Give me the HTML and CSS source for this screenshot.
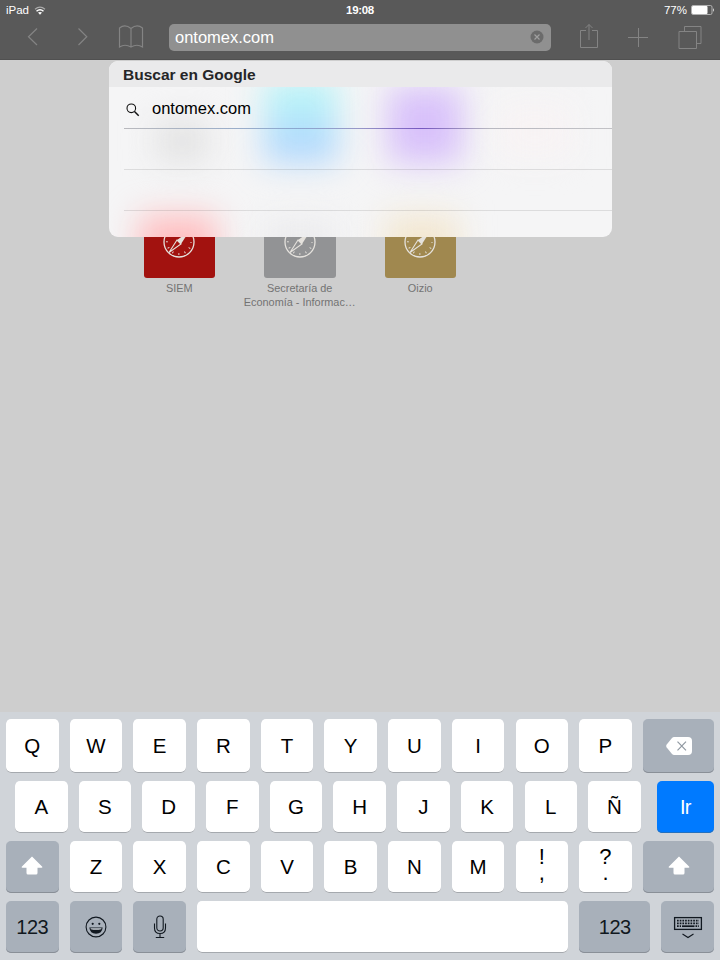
FILE: index.html
```
<!DOCTYPE html>
<html lang="es">
<head>
<meta charset="utf-8">
<title>Safari</title>
<link rel="stylesheet" href="styles.css">
</head>
<body>
<svg class="defs" width="0" height="0" aria-hidden="true">
  <symbol id="compass" viewBox="0 0 32 32">
    <circle cx="16" cy="16" r="15" fill="none" stroke="currentColor" stroke-width="1.3"/>
    <circle cx="16" cy="16" r="12" fill="none" stroke="currentColor" stroke-width="2" stroke-dasharray=".9 5.383" stroke-dashoffset=".45"/>
    <path d="M26 5.500L18 18L14 14Z" fill="currentColor"/>
    <path d="M14 14L6 26.500L18 18Z" fill="none" stroke="currentColor" stroke-width="1.100"/>
  </symbol>
  <symbol id="shift" viewBox="0 0 22 20">
    <path d="M11 .5L21.300 10.700Q21.700 11.700 20.500 11.700H16.500V17Q16.500 18.500 15 18.500H7Q5.500 18.500 5.500 17V11.700H1.500Q.3 11.700 .7 10.700Z" fill="#fff"/>
  </symbol>
</svg>
<div class="screen">
  <header class="chrome">
    <div class="status">
      <div class="carrier"><span>iPad</span>
        <svg width="12" height="9" viewBox="0 0 12 9"><path d="M1 3.200Q6-1 11 3.200" fill="none" stroke="#aaa" stroke-width="1.200"/><path d="M2.500 5.200Q6 2.200 9.500 5.200" fill="none" stroke="#fff" stroke-width="1.500"/><path d="M4 6.600Q6 5.200 8 6.600L6 8.800Z" fill="#fff"/></svg>
      </div>
      <div class="clock">19:08</div>
      <div class="power"><span>77%</span>
        <svg width="24" height="10" viewBox="0 0 24 10"><rect x=".5" y=".5" width="20.500" height="9" rx="1.500" fill="none" stroke="#c8c8c8" stroke-width=".8"/><rect x="1" y="1" width="15.500" height="8" rx="1" fill="#fff"/><path d="M22 3Q23.700 5 22 7Z" fill="#fff"/></svg>
      </div>
    </div>
    <nav class="toolbar">
      <svg class="back" width="12" height="20" viewBox="0 0 12 20"><path d="M10 1.500L1.500 9.800L10 18"/></svg>
      <svg class="fwd" width="12" height="20" viewBox="0 0 12 20"><path d="M1.500 1.500L9.800 9.800L1.500 18"/></svg>
      <svg class="book" width="26" height="24" viewBox="0 0 26 24"><path d="M13 3.500Q7-1.500 1.500 3V22Q7 18.500 13 22Q19 18.500 24.500 22V3Q19-1.500 13 3.500ZM13 3.500V22"/></svg>
      <div class="address"><span>ontomex.com</span>
        <svg width="14" height="14" viewBox="0 0 14 14"><circle cx="7" cy="7" r="6.500"/><path d="M4.500 4.500L9.500 9.500M9.500 4.500L4.500 9.500"/></svg>
      </div>
      <svg class="share" width="20" height="26" viewBox="0 0 20 26"><path d="M7 7.500H1.500V24.500H18.500V7.500H13M10 17V1.500M6.500 5L10 1.500L13.500 5"/></svg>
      <svg class="plus" width="20" height="20" viewBox="0 0 20 20"><path d="M0 10.500H20M10.500 1V20"/></svg>
      <svg class="tabs" width="24" height="24" viewBox="0 0 24 24"><path d="M1 6.500H18.500V23.500H1ZM6.500 6.500V1.500H23V18.500H18.500"/></svg>
    </nav>
  </header>

  <main class="page">
    <div class="favorites">
      <div class="fav"><div class="tile red"><svg width="32" height="32"><use href="#compass"/></svg></div><p>SIEM</p></div>
      <div class="fav"><div class="tile gray"><svg width="32" height="32"><use href="#compass"/></svg></div><p>Secretaría de<br>Economía - Informac…</p></div>
      <div class="fav"><div class="tile gold"><svg width="32" height="32"><use href="#compass"/></svg></div><p>Oizio</p></div>
    </div>
    <section class="suggest">
      <svg class="glow" width="503" height="176" viewBox="0 0 503 176">
        <defs>
          <linearGradient id="sky" x1="0" y1="0" x2="0" y2="1"><stop offset=".3" stop-color="#b8f3f8"/><stop offset=".7" stop-color="#b2d9fd"/></linearGradient>
        </defs>
        <rect x="47" y="60" width="52" height="40" fill="#e2e2e2"/>
        <rect x="155" y="18" width="74" height="84" fill="url(#sky)"/>
        <rect x="279" y="26" width="74" height="76" fill="#d8c1fa"/>
        <rect x="390" y="44" width="72" height="52" fill="#f8f3f4"/>
        <rect x="30" y="154" width="78" height="60" fill="#ffbec0"/>
        <rect x="155" y="160" width="72" height="60" fill="#ebebed"/>
        <rect x="276" y="154" width="74" height="60" fill="#f3e7d0"/>
      </svg>
      <h2><span>Buscar en Google</span></h2>
      <div class="results">
        <div class="result first"><svg width="14" height="14" viewBox="0 0 14 14"><circle cx="5.300" cy="5.300" r="4.300"/><path d="M8.500 8.500L12.700 12.700" stroke-width="1.500"/></svg><span>ontomex.com</span></div>
        <div class="result"></div>
        <div class="result"></div>
      </div>
    </section>
  </main>

  <div class="keyboard">
    <div class="row r1">
      <div class="key">Q</div><div class="key">W</div><div class="key">E</div><div class="key">R</div><div class="key">T</div><div class="key">Y</div><div class="key">U</div><div class="key">I</div><div class="key">O</div><div class="key">P</div>
      <div class="key dark wide"><svg width="26" height="18" viewBox="0 0 26 18"><path d="M8 0H22Q26 0 26 4V14Q26 18 22 18H8Q7 18 6 17L.7 10.500Q-.3 9 .7 7.500L6 1Q7 0 8 0Z" fill="#fff"/><path d="M11.500 4.700L20 13.300M20 4.700L11.500 13.300" stroke="#9098a1" stroke-width="1.200"/></svg></div>
    </div>
    <div class="row r2">
      <div class="key">A</div><div class="key">S</div><div class="key">D</div><div class="key">F</div><div class="key">G</div><div class="key">H</div><div class="key">J</div><div class="key">K</div><div class="key">L</div><div class="key">Ñ</div>
      <div class="key go">Ir</div>
    </div>
    <div class="row r3">
      <div class="key dark shift"><svg width="22" height="20"><use href="#shift"/></svg></div><div class="key">Z</div><div class="key">X</div><div class="key">C</div><div class="key">V</div><div class="key">B</div><div class="key">N</div><div class="key">M</div><div class="key dual"><p>!<br>,</p></div><div class="key dual"><p>?<br>.</p></div>
      <div class="key dark wide shift"><svg width="22" height="20"><use href="#shift"/></svg></div>
    </div>
    <div class="row r4">
      <div class="key dark num">123</div>
      <div class="key dark"><svg width="22" height="22" viewBox="0 0 22 22"><circle cx="11" cy="11" r="9.900" fill="none" stroke="#111820" stroke-width="1.100"/><circle cx="7.700" cy="7.800" r="1.100" fill="#111820"/><circle cx="14.300" cy="7.800" r="1.100" fill="#111820"/><path d="M4.300 11.500H17.700Q17 17.700 11 17.700Q5 17.700 4.300 11.500Z" fill="#111820"/><path d="M5.500 12.200H16.500L16.200 13.200Q11 14.200 5.800 13.200Z" fill="#cdd2d8"/></svg></div>
      <div class="key dark"><svg width="14" height="24" viewBox="0 0 14 24" fill="none" stroke="#111820" stroke-width="1.100"><rect x="3.800" y="1" width="6.400" height="15" rx="3.200"/><path d="M1.500 8.500V13Q1.500 18.500 7 18.500Q12.500 18.500 12.500 13V8.500M7 18.500V22.500M2.800 22.500H11.200"/></svg></div>
      <div class="key space"></div>
      <div class="key dark wide num">123</div>
      <div class="key dark hide"><svg width="30" height="24" viewBox="0 0 30 24" fill="none" stroke="#111820"><rect x="1.600" y="2.600" width="26.800" height="11.800" stroke-width="1.300"/><path d="M4 5.600H26M4 8.300H26" stroke-width="1.700" stroke-dasharray="1.700 1"/><path d="M4 11.200H8M22.500 11.200H26" stroke-width="1.700" stroke-dasharray="1.700 1"/><path d="M9 11.200H21.500" stroke-width="1.700"/><path d="M9.500 19L15 22.500L20.500 19" stroke-width="1.100"/></svg></div>
    </div>
  </div>
</div>
</body>
</html>
```
FILE: styles.css
```
* { box-sizing: border-box; }
body { margin: 0; font-family: "Liberation Sans", Arial, sans-serif; }
svg { display: block; flex: none; }
.defs { position: absolute; }
.screen { width: 720px; height: 960px; display: flex; flex-direction: column; background: #cecece; overflow: hidden; }

.chrome { height: 60px; flex: none; background: #595959; border-bottom: 1px solid #505050; color: #fff; }
.status { height: 20px; display: grid; grid-template-columns: 1fr auto 1fr; align-items: center; padding: 0 5px 0 6px; font-size: 12px; line-height: 20px; }
.carrier, .power { display: flex; align-items: center; }
.carrier { gap: 5px; font-size: 11.500px; }
.clock { margin-right: 1px; font-weight: bold; font-size: 11.500px; letter-spacing: -.3px; }
.power { justify-content: flex-end; gap: 4px; font-size: 11.500px; }
.toolbar { height: 34px; display: flex; align-items: center; fill: none; stroke: #848484; stroke-width: 1.2; }
.back { margin-left: 27px; }
.fwd { margin-left: 38px; }
.book { margin-left: 29px; }
.address { width: 382px; height: 27px; margin-left: 25px; margin-right: 28px; padding: 0 7px 0 6px; display: flex; align-items: center; justify-content: space-between; background: #909090; border-radius: 5px; font-size: 16.500px; }
.address circle { fill: #6b6b6b; stroke: none; }
.address path { stroke: #a0a0a0; }
.share { margin-top: -2px; }
.plus { margin-left: 29px; }
.tabs { margin: -1px 0 0 30px; }
.share, .plus, .tabs { stroke-width: 1; }

.page { flex: 1; position: relative; }
.favorites { display: flex; padding: 145px 0 0 119px; }
.fav { width: 120.500px; text-align: center; color: #737373; }
.tile { width: 71.500px; height: 72.500px; margin: 0 auto; padding-top: 2px; border-radius: 3px; display: flex; align-items: center; justify-content: center; color: #e5e2dd; }
.red { background: #a2120f; }
.gray { background: #929395; }
.gold { background: #a0884f; }
.fav p { margin: 3.500px 0 0; font-size: 10.900px; line-height: 14px; white-space: nowrap; }

.suggest { position: absolute; left: 109px; top: 1px; width: 503px; height: 176px; border-radius: 9px; overflow: hidden; background: #f5f5f6; }
.glow { position: absolute; left: 0; top: 0; overflow: visible; }
.glow rect { filter: blur(16px); }
.suggest h2 { position: relative; margin: 0; height: 26px; padding-left: 14px; background: #eaeaeb; color: #252527; font-size: 15.500px; line-height: 28px; }
.results { position: relative; }
.result { height: 41px; margin-left: 15px; border-bottom: 1px solid #0000001a; display: flex; align-items: center; gap: 13px; font-size: 16.500px; color: #000; }
.result svg { margin: 4px 0 0 2px; fill: none; stroke: #111; stroke-width: 1.100; }
.result span { margin-left: -1px; }
.first { border-bottom: 0; height: 42px; background: linear-gradient(90deg, #b9b9bd, #8ba8d0 35%, #9898c8 48%, #7657c0 61%, #b8b8c0 75%, #c2c2c6) bottom / 100% 1px no-repeat; }

.keyboard { height: 248px; flex: none; background: #d0d4d9; padding: 7px 6px 0; display: flex; flex-direction: column; gap: 8px; }
.row { display: flex; gap: 11.200px; height: 52px; }
.r1 { height: 54px; }
.r2 { padding-left: 9px; }
.key { width: 52.500px; flex: none; border-radius: 5px; background: #fff; box-shadow: inset 0 -1px #a5a9ae; color: #000; font-size: 20.500px; display: flex; align-items: center; justify-content: center; }
.dark { background: #a8b0ba; box-shadow: inset 0 -1px #898f97; color: #111820; }
.shift { padding-bottom: 2px; }
.wide { width: 71px; }
.wide svg { margin-left: 1px; }
.go { width: 57px; margin-left: 5px; background: #007aff; box-shadow: inset 0 -1px #2470bd; color: #fff; font-size: 20px; letter-spacing: -.8px; }
.num { font-size: 20px; letter-spacing: -.4px; }
.space { width: 371px; }
.dual p { margin: 0 0 4px; text-align: center; line-height: 16px; font-size: 22px; }
```
